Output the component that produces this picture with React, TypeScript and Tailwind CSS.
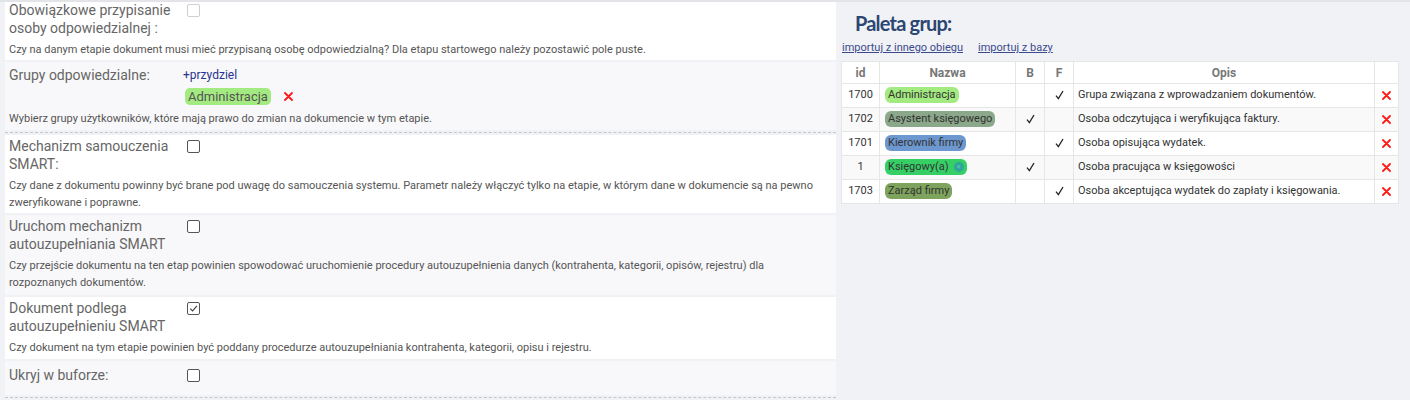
import React from "react";

type Group = {
  id: string;
  name: string;
  color: string;
  b: boolean;
  f: boolean;
  opis: string;
  globe?: boolean;
};

const groups: Group[] = [
  { id: "1700", name: "Administracja", color: "bg-[#a3ea80]", b: false, f: true, opis: "Grupa związana z wprowadzaniem dokumentów." },
  { id: "1702", name: "Asystent księgowego", color: "bg-[#8ca88a]", b: true, f: false, opis: "Osoba odczytująca i weryfikująca faktury." },
  { id: "1701", name: "Kierownik firmy", color: "bg-[#6d97cf]", b: false, f: true, opis: "Osoba opisująca wydatek." },
  { id: "1", name: "Księgowy(a)", color: "bg-[#36cf66]", b: true, f: false, opis: "Osoba pracująca w księgowości", globe: true },
  { id: "1703", name: "Zarząd firmy", color: "bg-[#7ea35c]", b: false, f: true, opis: "Osoba akceptująca wydatek do zapłaty i księgowania." },
];

const RedX = () => (
  <svg width="9" height="9" viewBox="0 0 9 9" className="inline-block">
    <path d="M1 1 L8 8 M8 1 L1 8" stroke="#ff1a1a" strokeWidth="1.8" strokeLinecap="round" />
  </svg>
);

const Tick = () => (
  <svg width="9" height="10" viewBox="0 0 9 10" className="inline-block">
    <path d="M1 5.6 L3.4 8.6 L8 1" stroke="#222" strokeWidth="1.3" fill="none" />
  </svg>
);

const Checkbox = ({ checked = false, disabled = false }: { checked?: boolean; disabled?: boolean }) => (
  <div
    className={`mt-[3px] w-[13px] h-[13px] rounded-[2px] border flex items-center justify-center ${
      disabled ? "border-[#cfcfcf] bg-white" : "border-[#555] bg-white"
    }`}
  >
    {checked && (
      <svg width="9" height="9" viewBox="0 0 9 9">
        <path d="M1.2 4.6 L3.6 6.9 L7.9 1.8" stroke="#444" strokeWidth="1.2" fill="none" />
      </svg>
    )}
  </div>
);

type RowProps = {
  label: React.ReactNode;
  control: React.ReactNode;
  desc?: React.ReactNode;
  gray?: boolean;
  className?: string;
};

const SettingRow = ({ label, control, desc, gray, className = "" }: RowProps) => (
  <div className={`${gray ? "bg-[#f8f8fa]" : "bg-white"} px-1 ${className}`}>
    <div className="flex">
      <div className="w-[178px] shrink-0 text-[14px] leading-[18px] text-[#666]">{label}</div>
      <div>{control}</div>
    </div>
    {desc && <div className="mt-[4px] text-[11px] leading-[17px] text-[#555] pr-4">{desc}</div>}
  </div>
);

export default function App() {
  return (
    <div
      className="w-[1410px] h-[400px] overflow-hidden bg-[#f1f2f6] border-t-2 border-[#e3e4e8] flex"
      style={{ fontFamily: "Roboto, 'Liberation Sans', sans-serif" }}
    >
      {/* Left settings column */}
      <div className="w-[831px] ml-[5px] flex flex-col gap-[2px]">
        <SettingRow
          label={<>Obowiązkowe przypisanie<br />osoby odpowiedzialnej :</>}
          control={<Checkbox disabled />}
          desc="Czy na danym etapie dokument musi mieć przypisaną osobę odpowiedzialną? Dla etapu startowego należy pozostawić pole puste."
          className="-mt-[1px] pb-[2px]"
        />
        <div className="bg-[#f8f8fa] px-1 pt-[4px] pb-[3px]">
          <div className="flex">
            <div className="w-[174px] shrink-0 text-[14px] leading-[18px] text-[#666]">Grupy odpowiedzialne:</div>
            <div>
              <div className="text-[12px] leading-[18px] text-[#27338f]">+przydziel</div>
              <div className="flex items-center gap-[13px] mt-[4px] pl-[2px]">
                <span className="bg-[#a3ea80] rounded-[5px] px-[3px] text-[13px] leading-[17px] text-[#555]">Administracja</span>
                <RedX />
              </div>
            </div>
          </div>
          <div className="mt-[5px] text-[11px] leading-[17px] text-[#555]">
            Wybierz grupy użytkowników, które mają prawo do zmian na dokumencie w tym etapie.
          </div>
        </div>
        <div className="border-t border-dashed border-[#c6c6c6]" />
        <SettingRow
          label={<>Mechanizm samouczenia<br />SMART:</>}
          control={<Checkbox />}
          desc="Czy dane z dokumentu powinny być brane pod uwagę do samouczenia systemu. Parametr należy włączyć tylko na etapie, w którym dane w dokumencie są na pewno zweryfikowane i poprawne."
          className="pt-[2px] pb-[2px]"
        />
        <SettingRow
          gray
          label={<>Uruchom mechanizm<br />autouzupełniania SMART</>}
          control={<Checkbox />}
          desc="Czy przejście dokumentu na ten etap powinien spowodować uruchomienie procedury autouzupełnienia danych (kontrahenta, kategorii, opisów, rejestru) dla rozpoznanych dokumentów."
          className="pt-[2px] pb-[4px]"
        />
        <SettingRow
          label={<>Dokument podlega<br />autouzupełnieniu SMART</>}
          control={<Checkbox checked />}
          desc="Czy dokument na tym etapie powinien być poddany procedurze autouzupełniania kontrahenta, kategorii, opisu i rejestru."
          className="pt-[2px] pb-[3px]"
        />
        <SettingRow
          gray
          label="Ukryj w buforze:"
          control={<Checkbox />}
          className="pt-[5px] pb-[11px]"
        />
        <div className="border-t border-dashed border-[#c6c6c6]" />
      </div>

      {/* Right palette column */}
      <div className="flex-1 pl-[5px] pr-[11px]">
        <h2
          className="pl-[14px] pt-[7px] text-[20px] leading-[28px] font-bold tracking-[-0.8px] text-[#2c4672]"
          style={{ fontFamily: "Lato, 'Open Sans', sans-serif" }}
        >
          Paleta grup:
        </h2>
        <div className="flex gap-[15px] pl-[1px] mt-[4px] text-[11px] leading-[14px] text-[#3a4a8c]">
          <a className="underline cursor-pointer">importuj z innego obiegu</a>
          <a className="underline cursor-pointer">importuj z bazy</a>
        </div>
        <table className="mt-[6px] w-[558px] border-collapse bg-white text-[11px] text-[#333]">
          <thead>
            <tr className="h-[22px] text-[12px] text-[#777]">
              <th className="w-[38px] border border-[#e6e6e6] font-bold">id</th>
              <th className="w-[136px] border border-[#e6e6e6] font-bold">Nazwa</th>
              <th className="w-[29px] border border-[#e6e6e6] font-bold">B</th>
              <th className="w-[29px] border border-[#e6e6e6] font-bold">F</th>
              <th className="border border-[#e6e6e6] font-bold">Opis</th>
              <th className="w-[24px] border border-[#e6e6e6]"></th>
            </tr>
          </thead>
          <tbody>
            {groups.map((g, i) => (
              <tr key={g.id} className={`h-[24px] ${i % 2 === 1 ? "bg-[#f9f9f9]" : "bg-white"}`}>
                <td className="border border-[#e6e6e6] text-center">{g.id}</td>
                <td className="border border-[#e6e6e6] px-[5px]">
                  <span className={`${g.color} inline-flex items-center gap-[5px] rounded-[6px] px-[3px] leading-[16px] text-[#333]`}>
                    {g.name}
                    {g.globe && (
                      <svg width="10" height="10" viewBox="0 0 10 10">
                        <circle cx="5" cy="5" r="5" fill="#2fa59c" />
                        <path d="M3 3.5 Q5 2.5 6.5 4 L5.5 6.5 L3.5 6 Z" fill="#48c0a6" />
                      </svg>
                    )}
                  </span>
                </td>
                <td className="border border-[#e6e6e6] text-center">{g.b && <Tick />}</td>
                <td className="border border-[#e6e6e6] text-center">{g.f && <Tick />}</td>
                <td className="border border-[#e6e6e6] px-[4px]">{g.opis}</td>
                <td className="border border-[#e6e6e6] text-center">
                  <RedX />
                </td>
              </tr>
            ))}
          </tbody>
        </table>
      </div>
    </div>
  );
}
